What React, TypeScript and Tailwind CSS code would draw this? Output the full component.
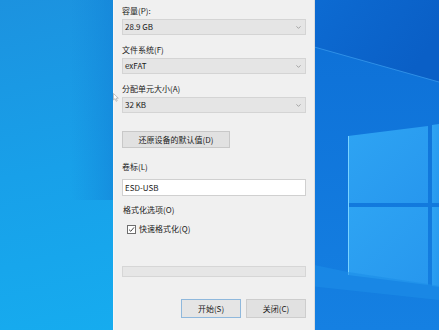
import { ChevronDown } from 'lucide-react'

const font = { fontFamily: '"Noto Sans CJK SC", "Noto Sans", sans-serif' }

function Wallpaper() {
  return (
    <svg className="absolute inset-0" width="439" height="330" viewBox="0 0 439 330">
      <defs>
        <linearGradient id="left" x1="0" y1="0" x2="0.3" y2="1">
          <stop offset="0" stopColor="#1c92df" />
          <stop offset="0.5" stopColor="#18a0e9" />
          <stop offset="1" stopColor="#16acef" />
        </linearGradient>
        <linearGradient id="edge" x1="0" y1="0" x2="1" y2="0">
          <stop offset="0" stopColor="#1485d8" stopOpacity="0" />
          <stop offset="1" stopColor="#1380d6" stopOpacity="0.6" />
        </linearGradient>
        <linearGradient id="right" x1="0" y1="0" x2="0" y2="1">
          <stop offset="0" stopColor="#0d6fd6" />
          <stop offset="1" stopColor="#1580e2" />
        </linearGradient>
        <linearGradient id="top" x1="0" y1="0" x2="1" y2="0.4">
          <stop offset="0" stopColor="#0d6cd3" />
          <stop offset="1" stopColor="#0a5fc6" />
        </linearGradient>
        <linearGradient id="pane" x1="0" y1="0" x2="1" y2="1">
          <stop offset="0" stopColor="#2ea4f3" />
          <stop offset="1" stopColor="#2797ee" />
        </linearGradient>
      </defs>
      <rect width="439" height="330" fill="url(#left)" />
      <rect x="70" width="45" height="200" fill="url(#edge)" />
      <rect x="300" width="139" height="330" fill="url(#right)" />
      <polygon points="300,0 439,0 439,82 300,43" fill="url(#top)" />
      <line x1="300" y1="43" x2="439" y2="82" stroke="#3d9ff0" strokeWidth="1" opacity="0.7" />
      <polygon points="348,136 428,126 428,203 348,203" fill="url(#pane)" />
      <polygon points="348,207 428,207 428,285 348,275" fill="url(#pane)" />
      <polygon points="432,125 439,124 439,203 432,203" fill="url(#pane)" />
      <polygon points="432,207 439,207 439,287 432,286" fill="url(#pane)" />
      <line x1="348.5" y1="136" x2="348.5" y2="275" stroke="#79d3ff" strokeWidth="1" />
      <polygon points="300,262 348,272 428,284 439,286 439,300 300,285" fill="#1c8ee8" opacity="0.6" />
    </svg>
  )
}

function Label({ children, className = '' }: { children: React.ReactNode; className?: string }) {
  return <div className={`h-[14px] leading-[14px] text-[8px] text-[#1a1a1a] ${className}`}>{children}</div>
}

function Select({ value }: { value: string }) {
  return (
    <div className="mt-[1px] h-[16px] flex items-center justify-between border border-[#d4d4d4] bg-[#e5e5e5] pl-[2px] pr-[3px] text-[8px] text-[#1a1a1a]">
      <span>{value}</span>
      <ChevronDown className="w-[7px] h-[7px] text-[#8a8a8a]" strokeWidth={2.5} />
    </div>
  )
}

export default function App() {
  return (
    <div className="relative w-[439px] h-[330px] overflow-hidden" style={font}>
      <Wallpaper />
      <div className="relative ml-[113px] w-[202px] h-[330px] bg-[#f0f0f0] border-l border-[#f6f6f6] border-r border-r-[#dcdcdc] px-[8px] pt-[4px]">
        <Label>容量(P):</Label>
        <Select value="28.9 GB" />
        <Label className="mt-[8px]">文件系统(F)</Label>
        <Select value="exFAT" />
        <Label className="mt-[8px]">分配单元大小(A)</Label>
        <Select value="32 KB" />

        <button className="mt-[18px] w-[108px] h-[17px] flex items-center justify-center border border-[#c8c8c8] bg-[#e1e1e1] text-[8px] text-[#1a1a1a]">
          还原设备的默认值(D)
        </button>

        <Label className="mt-[12px]">卷标(L)</Label>
        <div className="mt-[5px] h-[17px] flex items-center border border-[#d0d0d0] bg-white pl-[2px] text-[8px] text-[#1a1a1a]">
          ESD-USB
        </div>

        <Label className="mt-[7px] pl-[1px]">格式化选项(O)</Label>
        <div className="mt-[5px] h-[14px] flex items-center gap-[3px] pl-[5px]">
          <div className="w-[9px] h-[9px] border border-[#6e6e6e] bg-white flex items-center justify-center">
            <svg width="7" height="7" viewBox="0 0 7 7">
              <path d="M1 3.6 L2.8 5.3 L6 1.4" fill="none" stroke="#333" strokeWidth="0.9" />
            </svg>
          </div>
          <span className="text-[8px] leading-[14px] text-[#1a1a1a]">快速格式化(Q)</span>
        </div>

        <div className="mt-[30px] h-[11px] border border-[#d6d6d6] bg-[#e6e6e6]" />

        <div className="mt-[22px] flex justify-end gap-[5px]">
          <button className="w-[60px] h-[19px] flex items-center justify-center border border-[#8fb8dc] bg-[#e5e5e5] text-[8px] text-[#1a1a1a]">
            开始(S)
          </button>
          <button className="w-[60px] h-[19px] flex items-center justify-center border border-[#cdcdcd] bg-[#e1e1e1] text-[8px] text-[#1a1a1a]">
            关闭(C)
          </button>
        </div>
      </div>
      <svg className="absolute left-[113px] top-[93px]" width="6" height="9" viewBox="0 0 6 9">
        <path d="M0.5 0.5 L0.5 7 L2 5.6 L3.2 8.3 L4.2 7.8 L3.1 5.2 L5.3 5.2 Z" fill="#fff" stroke="#9a9a9a" strokeWidth="0.6" />
      </svg>
    </div>
  )
}
